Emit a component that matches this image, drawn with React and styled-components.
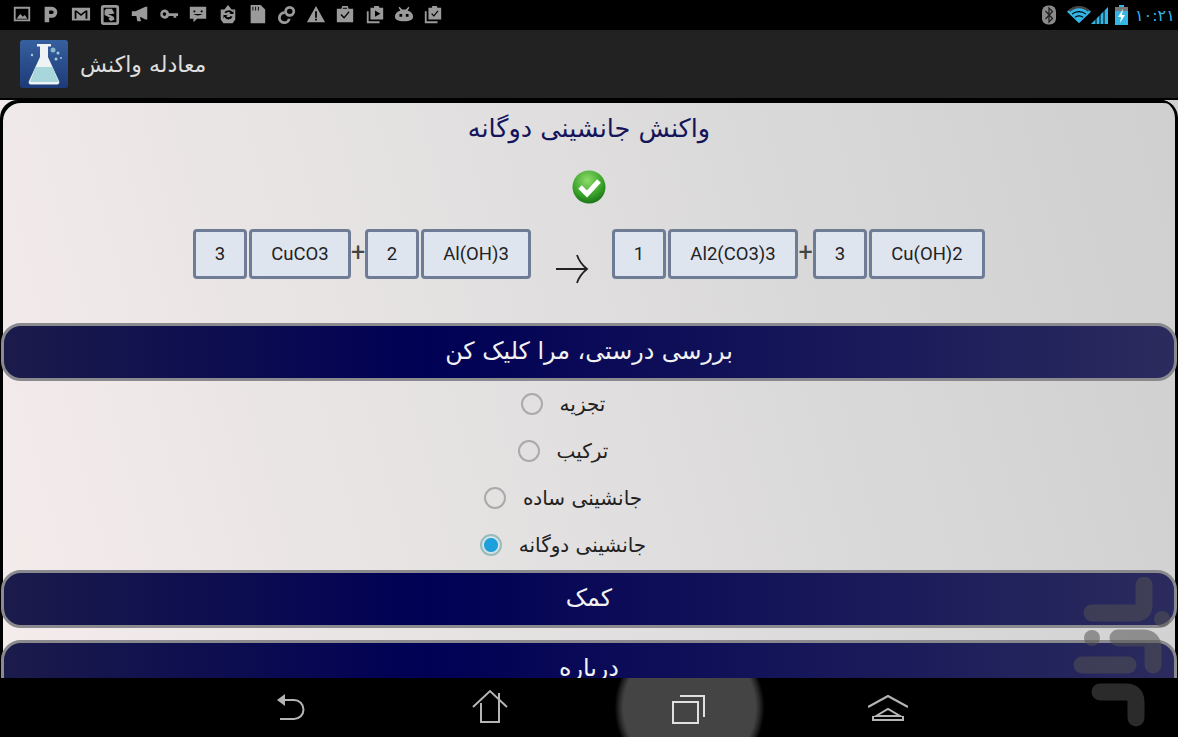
import React from 'react';
import styled, { createGlobalStyle } from 'styled-components';

const Global = createGlobalStyle`
  html, body { margin: 0; padding: 0; background: #000; }
  body { width: 1178px; height: 737px; overflow: hidden; font-family: "DejaVu Sans", sans-serif; }
`;
const Screen = styled.div`
  position: relative; width: 1178px; height: 737px; overflow: hidden;
  display: flex; flex-direction: column; background: #000;
`;
const StatusBar = styled.div`
  height: 30px; flex: none; background: #000; display: flex; align-items: center;
  justify-content: space-between; padding: 0 6px 0 12px;
`;
const StatusGroup = styled.div`display: flex; align-items: center; gap: ${p => p.$gap}px;`;
const StatusIcon = styled.svg`width: 20px; height: 20px; flex: none; fill: #9a9a9a; stroke: none; display: block;`;
const RightIcon = styled.svg`height: 20px; flex: none; display: block; width: ${p => p.$w}px; margin-left: ${p => p.$ml || 0}px;`;
const Clock = styled.span`
  font: 16px "DejaVu Sans", sans-serif; color: #33b5e5; margin-left: 7px; letter-spacing: .5px; width: 37px; white-space: nowrap;
`;
const AppBar = styled.header`
  flex: none; background: #222; display: flex; align-items: center;
  padding: 0 0 0 20px; gap: 12px; border-bottom: 2px solid #000; box-sizing: border-box; height: 70px;
`;
const AppTitle = styled.h1`
  margin: 0; font: 400 22px "DejaVu Sans", sans-serif; color: #dedede; white-space: nowrap;
`;
const Content = styled.div`
  height: 578px; flex: none; overflow: hidden;
  background: linear-gradient(75deg, #f5ecec 0%, #e2e0e0 45%, #cfcfcf 100%);
`;
const Panel = styled.main`
  height: 578px; box-sizing: border-box; padding-top: 3px;
  border-radius: 18px 18px 0 0;
  box-shadow: inset 3px 3px 0 #000, inset -3px 0 0 #000;
  display: flex; flex-direction: column; align-items: center;
`;
const Heading = styled.h2`
  margin: 0; height: 50px; font: 400 25.500px/50px "DejaVu Sans", sans-serif;
  color: #14145a; white-space: nowrap;
`;
const CheckMark = styled.svg`width: 34px; height: 34px; margin-top: 17px; flex: none; display: block;`;
const Equation = styled.div`
  margin-top: 25px; height: 50px; flex: none; display: flex; align-items: center; gap: 2px; direction: ltr;
`;
const Cell = styled.div`
  box-sizing: border-box; width: ${p => p.$w}px; height: 50px; background: #dfe5ef;
  border: 3px solid #6f7c96; border-radius: 4px; display: flex; align-items: center; justify-content: center;
  font: 18.500px Roboto, sans-serif; color: #222;
`;
const Plus = styled.span`
  width: ${p => p.$w}px; display: flex; justify-content: center; font: 400 25px Roboto, sans-serif; color: #444; margin: 0 0 3px; line-height: 1;
`;
const Arrow = styled.svg`width: 34px; height: 30px; margin: 30px 21px 0 22px; flex: none; display: block;`;
const WideBar = styled.button`
  box-sizing: border-box; flex: none; width: 1176px; height: 58px; margin-top: ${p => p.$mt || 0}px;
  border: 3.500px solid #8a8a8e; border-radius: 20px; padding: 0 0 3px;
  background: linear-gradient(90deg, #1b1b4b 0%, #000055 36%, #2b2b5e 100%);
  color: #f2f2f2; font: 400 23.800px "DejaVu Sans", sans-serif; text-align: center;
`;
const RadioGroup = styled.div`display: flex; flex-direction: column; align-items: center; padding-right: 52px; flex: none;`;
const RadioRow = styled.label`
  height: 47px; display: flex; align-items: center; gap: 17px; padding-bottom: 1px; box-sizing: border-box;
  font: 20px "DejaVu Sans", sans-serif; color: #222;
`;
const RadioDot = styled.span`
  box-sizing: border-box; width: 22px; height: 22px; border-radius: 50%; flex: none;
  border: 2px solid ${p => (p.$on ? '#9bb' : '#aaa')};
  background: ${p => (p.$on ? 'radial-gradient(circle, #1ea0dc 0 6.5px, #d5e3ea 7.5px)' : 'transparent')};
`;
const RadioText = styled.span`white-space: nowrap;`;
const NavBar = styled.nav`
  height: 59px; flex: none; background: #000; display: flex; justify-content: center; align-items: stretch; padding-left: 1px;
`;
const NavButton = styled.div`
  width: 199px; display: flex; align-items: center; justify-content: center;
  background: ${p => (p.$active ? 'radial-gradient(circle at 50% 50%, #444 66px, #2a2a2a 70px, transparent 75px)' : 'none')};
`;
const NavIcon = styled.svg`width: 40px; height: 40px; fill: none; stroke: ${p => p.$c || '#b5b5b5'}; stroke-width: 2; display: block;`;
const Watermark = styled.svg`position: absolute; right: 0; bottom: 0; width: 110px; height: 160px; pointer-events: none; opacity: .535;`;
const AppLogo = styled.svg`width: 48px; height: 48px; flex: none; display: block;`;

const statusPaths = [
  <g key="a"><path d="M1 2h18v16H1z M3 4v12h14V4z" fillRule="evenodd"/><path d="M4 15l4-5 3 3 2-2 3 4z"/></g>,
  <path key="b" d="M3 2h8a6 6 0 0 1 0 12H8v5H3z M8 6v4h3a2 2 0 0 0 0-4z" fillRule="evenodd"/>,
  <path key="c" d="M0 3h20v14H0z M3 6v9h2V8l5 4 5-4v7h2V6h-2l-5 4-5-4z" fillRule="evenodd"/>,
  <g key="d"><path d="M3 0h14a3 3 0 0 1 3 3v16a3 3 0 0 1-3 3H3a3 3 0 0 1-3-3V3a3 3 0 0 1 3-3z M3 3v16h14V3z" fillRule="evenodd"/><path d="M6 4h6l3 5-3 1h-4l6 3 1 3-4 2-3-3 2-1-6-3V6z"/></g>,
  <path key="e" d="M1 7h4l11-5h2v14h-2L10 13l1 5H7l-1-6H1z"/>,
  <path key="f" d="M5 5a5 5 0 0 1 5 4h10v3h-2v2h-3v-2h-5a5 5 0 1 1-5-7z M5 8a2 2 0 1 0 0 4 2 2 0 0 0 0-4z" fillRule="evenodd"/>,
  <path key="g" d="M1 2h18v13H9l-4 4v-4H1z M5 6v2h2V6z M13 6v2h2V6z M5 10c3 2 7 2 10 0z" fillRule="evenodd"/>,
  <path key="h" d="M10 0l4 5h4v11l-3 4H5l-3-4V5h4z M10 6a5 5 0 0 0-4 2l2 1a3 3 0 0 1 5 0l-2 1h5V6l-1 2a5 5 0 0 0-5-2z M5 11v4l1-2a5 5 0 0 0 9 0l-2-1a3 3 0 0 1-5 0l2-1z" fillRule="evenodd"/>,
  <path key="i" d="M3 0h11l5 5v15H3z M5 2v4h1V2z M8 2v4h1V2z M11 2v4h1V2z" fillRule="evenodd"/>,
  <path key="j" d="M13 1a6 6 0 1 1 0 12 6 6 0 0 1 0-12z M13 4a3 3 0 1 0 0 6 3 3 0 0 0 0-6z M7 7l1 3a4 4 0 1 0 3 5l3 0a7 7 0 1 1-7-8z" fillRule="evenodd"/>,
  <path key="k" d="M10 1l10 18H0z M9 7v7h2V7z M9 15v2h2v-2z" fillRule="evenodd"/>,
  <path key="l" d="M7 1h6l1 3h5v15H1V4h5z M8 3l-.5 1h5L12 3z M14 7l-5 6-3-3-1 1 4 4 6-7z" fillRule="evenodd"/>,
  <g key="m"><path d="M1 7h2v11h12v2H1z"/><path d="M9 1h5l1 2h4v13H5V3h4z M10 6v7l6-3.500z" fillRule="evenodd"/></g>,
  <path key="n" d="M5 2l3 3h4l3-3 1 1-2 3c4 1 6 4 6 7 0 3-3 5-10 5S0 16 0 13c0-3 2-6 6-7L4 3z M5 10v3h3v-3z M12 10v3h3v-3z" fillRule="evenodd"/>,
  <g key="o"><path d="M1 7h2v11h12v2H1z"/><path d="M9 1h5l1 2h4v13H5V3h4z M15 6l-4 5-2-2-1 1 3 3 5-6z" fillRule="evenodd"/></g>,
];

const options = [
  ['تجزیه', false],
  ['ترکیب', false],
  ['جانشینی ساده', false],
  ['جانشینی دوگانه', true],
];

export default function App() {
  return (
    <Screen>
      <Global />
      <StatusBar>
        <StatusGroup $gap={9.4}>
          {statusPaths.map((p, i) => <StatusIcon key={i} viewBox="0 0 20 22">{p}</StatusIcon>)}
        </StatusGroup>
        <StatusGroup $gap={0}>
          <RightIcon $w={14} viewBox="0 0 14 20">
            <rect x="0" y="0.500" width="14" height="19" rx="6" fill="#8a8a8a" />
            <path d="M3.500 6l7 7.500L7 17V3l3.500 3.500L3.500 14" fill="none" stroke="#222" strokeWidth="1.300" />
          </RightIcon>
          <RightIcon $w={24} $ml={11} viewBox="0 0 26 20">
            <path d="M13 19L0 6.500C7-1 19-1 26 6.500z" fill="#33b5e5" />
            <path d="M2.500 5.500C8.500 0 17.500 0 23.500 5.500" fill="none" stroke="#444" strokeWidth="2.500" />
            <path d="M5.500 9c4-3.500 11-3.500 15 0M8.500 12.500c2.500-2 6.500-2 9 0" fill="none" stroke="#000" strokeWidth="1.200" />
          </RightIcon>
          <RightIcon $w={17} viewBox="0 0 17 20">
            <path d="M0 19L17 2v17z" fill="#33b5e5" />
            <path d="M5 19v-6M9 19V9M13 19V5" stroke="#000" strokeWidth="1" />
          </RightIcon>
          <RightIcon $w={13} $ml={7} viewBox="0 0 13 20">
            <path d="M4 0h5v2h4v18H0V2h4z" fill="#33b5e5" />
            <path d="M0 2h13v4H0z" fill="#777" />
            <path d="M8 4L3 12h3l-1 6 5-8H7z" fill="#fff" />
          </RightIcon>
          <Clock>۱۰:۲۱</Clock>
        </StatusGroup>
      </StatusBar>
      <AppBar>
        <AppLogo viewBox="0 0 48 48">
          <defs>
            <linearGradient id="lg" x1="0" y1="0" x2="0" y2="1">
              <stop offset="0" stopColor="#37609f" />
              <stop offset="1" stopColor="#1d3b78" />
            </linearGradient>
          </defs>
          <rect width="48" height="48" rx="3" fill="url(#lg)" />
          <path d="M17 4h14v2.500h-3V17l11 24c1 2-.5 3.500-2 3.500H11c-1.500 0-3-1.500-2-3.500l11-24V6.500h-3z" fill="#eef4f6" />
          <path d="M15.500 27h17l6 15H10z" fill="#a9d6da" />
          <circle cx="33" cy="10" r="2.500" fill="#8fb6c8" />
          <circle cx="38" cy="13" r="1.500" fill="#a8cadb" />
          <circle cx="36" cy="19" r="1.500" fill="#a8cadb" />
          <circle cx="12" cy="15" r="1.200" fill="#a8cadb" />
          <circle cx="41" cy="18" r="1" fill="#a8cadb" />
        </AppLogo>
        <AppTitle dir="rtl">معادله واکنش</AppTitle>
      </AppBar>
      <Content>
        <Panel>
          <Heading dir="rtl">واکنش جانشینی دوگانه</Heading>
          <CheckMark viewBox="0 0 34 34">
            <defs>
              <radialGradient id="cg" cx="45%" cy="30%" r="75%">
                <stop offset="0" stopColor="#8fdc6a" />
                <stop offset="0.6" stopColor="#3ca52c" />
                <stop offset="1" stopColor="#146a14" />
              </radialGradient>
            </defs>
            <circle cx="17" cy="17" r="16.500" fill="url(#cg)" />
            <path d="M8 17l7 7L27 11" fill="none" stroke="#fff" strokeWidth="5" />
          </CheckMark>
          <Equation>
            <Cell $w={54}>3</Cell>
            <Cell $w={102}>CuCO3</Cell>
            <Plus $w={10}>+</Plus>
            <Cell $w={54}>2</Cell>
            <Cell $w={110}>Al(OH)3</Cell>
            <Arrow viewBox="0 0 34 30">
              <path d="M1 15h31M22 1c2 6 5 10 10 14-5 4-8 8-10 14" fill="none" stroke="#222" strokeWidth="1.800" />
            </Arrow>
            <Cell $w={54}>1</Cell>
            <Cell $w={130}>Al2(CO3)3</Cell>
            <Plus $w={11}>+</Plus>
            <Cell $w={54}>3</Cell>
            <Cell $w={116}>Cu(OH)2</Cell>
          </Equation>
          <WideBar $mt={44} dir="rtl">بررسی درستی، مرا کلیک کن</WideBar>
          <RadioGroup>
            {options.map(([label, on]) => (
              <RadioRow key={label}>
                <RadioDot $on={on} />
                <RadioText dir="rtl">{label}</RadioText>
              </RadioRow>
            ))}
          </RadioGroup>
          <WideBar $mt={1} dir="rtl">کمک</WideBar>
          <WideBar $mt={12} dir="rtl">درباره</WideBar>
        </Panel>
      </Content>
      <NavBar>
        <NavButton>
          <NavIcon viewBox="0 0 40 40">
            <path d="M9 12h14a9.500 9.500 0 0 1 0 19H9" />
            <path d="M6 12l8-6v12z" fill="#b5b5b5" stroke="none" />
          </NavIcon>
        </NavButton>
        <NavButton>
          <NavIcon viewBox="0 0 40 40">
            <path d="M3 19L20 3l17 16M11 15v19h18V15M29 5v10" />
          </NavIcon>
        </NavButton>
        <NavButton $active>
          <NavIcon $c="#e0e0e0" viewBox="0 0 40 40">
            <path d="M11 8h24v21" />
            <rect x="4" y="14" width="25" height="21" fill="none" />
          </NavIcon>
        </NavButton>
        <NavButton>
          <NavIcon viewBox="0 0 40 40">
            <path d="M0 19L20 8l20 11M8 28l12-7 12 7zM5 28v4h30v-4" />
          </NavIcon>
        </NavButton>
      </NavBar>
      <Watermark viewBox="1068 577 110 160">
        <g fill="none" stroke="rgb(82,82,82)" strokeWidth="17" strokeLinecap="round" strokeLinejoin="round">
          <path d="M1144 585v20q0 8-8 8h-44" />
          <path d="M1118 638h25q10 0 10 10v17" />
          <path d="M1082 665h46" />
          <path d="M1100 692h26q10 0 10 10v16" />
        </g>
        <circle cx="1162" cy="619" r="8" fill="rgb(82,82,82)" />
        <circle cx="1092" cy="638" r="8" fill="rgb(82,82,82)" />
      </Watermark>
    </Screen>
  );
}
